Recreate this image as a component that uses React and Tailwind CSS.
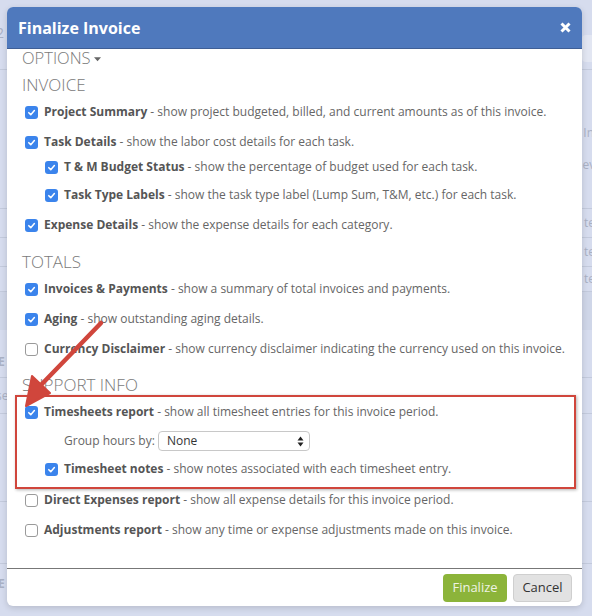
import React from 'react';

function Check({ checked }) {
  if (!checked) {
    return <span className="block h-[13px] w-[13px] shrink-0 rounded-[3px] border border-[#9a9a9a] bg-white" />;
  }
  return (
    <span className="flex h-[13px] w-[13px] shrink-0 items-center justify-center rounded-[3px] bg-[#3b84ec]">
      <svg width="9" height="9" viewBox="0 0 10 10">
        <path d="M2 5.2 L4.2 7.4 L8.2 2.8" fill="none" stroke="white" strokeWidth="1.7" strokeLinecap="round" strokeLinejoin="round" />
      </svg>
    </span>
  );
}

function Row({ label, desc, checked = true, nested = false, mt }) {
  return (
    <div className={`flex h-[18px] items-center ${nested ? 'pl-[38px]' : 'pl-[18px]'} ${mt}`}>
      <Check checked={checked} />
      <p className="ml-[6px] whitespace-nowrap text-[12px] text-[#666]">
        <span className="font-bold text-[#555]">{label}</span> - {desc}
      </p>
    </div>
  );
}

function Heading({ children, mt }) {
  return (
    <h3 className={`h-[20px] pl-[15px] text-[17px] font-light uppercase leading-[20px] text-[#7a7a7a] ${mt}`}>{children}</h3>
  );
}

function Backdrop() {
  return (
    <div className="flex h-full flex-col text-[12px] text-[#aab1c4]">
      <div className="flex h-[70px] items-start justify-between border-b border-[#c3cadc]">
        <span className="ml-[-4px] mt-[22px] text-[14px]">2</span>
        <span className="mt-[35px] h-[27px] w-[10px] rounded-l bg-[#e2e6f2]" />
      </div>
      <div className="flex h-[138px] flex-col items-end">
        <span className="mt-[54px] mr-[-2px]">In</span>
        <span className="mt-[14px] mr-[-10px]">eve</span>
      </div>
      <div className="flex h-[30px] items-center justify-end border-y border-[#c3cadc]"><span className="mr-[-3px]">te</span></div>
      <div className="flex h-[29px] items-center justify-end border-b border-[#c3cadc]"><span className="mr-[-3px]">te</span></div>
      <div className="flex h-[25px] items-center justify-end border-b border-[#c3cadc]"><span className="mr-[-3px]">te</span></div>
      <div className="h-[38px] bg-[#cfd6e8]" />
      <div className="flex h-[48px] items-end border-b border-[#c3cadc] pb-[6px]"><span className="ml-[-2px] font-bold">E</span></div>
      <div className="flex h-[36px] items-center border-b border-[#c3cadc]"><span className="ml-[-4px]">se</span></div>
      <div className="h-[88px] border-b border-[#c3cadc]" />
      <div className="h-[62px] border-b border-[#c3cadc]" />
      <div className="flex h-[40px] items-center"><span className="ml-[-2px] font-bold">E</span></div>
    </div>
  );
}

export default function App() {
  return (
    <div className="relative h-[616px] w-[592px] overflow-hidden bg-[#d6dcee] font-['Open_Sans',sans-serif]">
      <Backdrop />

      <div className="absolute left-[7px] top-[7px] flex h-[599px] w-[575px] flex-col rounded-md bg-white shadow-[0_2px_6px_rgba(0,0,0,0.15)]">
        <div className="flex h-[42px] shrink-0 items-center justify-between rounded-t-md border-b border-[#3f5f96] bg-[#4f79bd] pl-[11px] pr-[11px]">
          <h2 className="text-[16px] font-bold text-white">Finalize Invoice</h2>
          <svg width="11" height="11" viewBox="0 0 11 11">
            <path d="M1.5 1.5 L9.5 9.5 M9.5 1.5 L1.5 9.5" stroke="white" strokeWidth="3" />
          </svg>
        </div>

        <div className="flex flex-1 flex-col">
          <div className="flex h-[18px] items-center pl-[15px] text-[16.5px] font-light text-[#7a7a7a]">
            OPTIONS
            <svg className="ml-[3px] mt-[2px]" width="7" height="5" viewBox="0 0 8 5"><path d="M0 0 L8 0 L4 4.5 Z" fill="#666" /></svg>
          </div>

          <Heading mt="mt-[8px]">Invoice</Heading>
          <Row mt="mt-[8px]" label="Project Summary" desc="show project budgeted, billed, and current amounts as of this invoice." />
          <Row mt="mt-[12px]" label="Task Details" desc="show the labor cost details for each task." />
          <Row mt="mt-[7px]" nested label="T & M Budget Status" desc="show the percentage of budget used for each task." />
          <Row mt="mt-[10px]" nested label="Task Type Labels" desc="show the task type label (Lump Sum, T&M, etc.) for each task." />
          <Row mt="mt-[12px]" label="Expense Details" desc="show the expense details for each category." />

          <Heading mt="mt-[18px]">Totals</Heading>
          <Row mt="mt-[8px]" label="Invoices & Payments" desc="show a summary of total invoices and payments." />
          <Row mt="mt-[12px]" label="Aging" desc="show outstanding aging details." />
          <Row mt="mt-[12px]" checked={false} label="Currency Disclaimer" desc="show currency disclaimer indicating the currency used on this invoice." />

          <Heading mt="mt-[17px]">Support Info</Heading>
          <Row mt="mt-[8px]" label="Timesheets report" desc="show all timesheet entries for this invoice period." />
          <div className="mt-[10px] flex h-[20px] items-center pl-[57px]">
            <span className="w-[94px] text-[12px] text-[#666]">Group hours by:</span>
            <div className="flex h-[20px] w-[152px] items-center justify-between rounded-[4px] border border-[#c8c8c8] bg-white pl-[8px] pr-[5px]">
              <span className="text-[12px] text-[#333]">None</span>
              <svg width="7" height="11" viewBox="0 0 7 11">
                <path d="M3.5 0.5 L6.5 4.5 L0.5 4.5 Z M3.5 10.5 L6.5 6.5 L0.5 6.5 Z" fill="#222" />
              </svg>
            </div>
          </div>
          <Row mt="mt-[9px]" nested label="Timesheet notes" desc="show notes associated with each timesheet entry." />
          <Row mt="mt-[13px]" checked={false} label="Direct Expenses report" desc="show all expense details for this invoice period." />
          <Row mt="mt-[12px]" checked={false} label="Adjustments report" desc="show any time or expense adjustments made on this invoice." />
        </div>

        <div className="flex h-[38px] shrink-0 items-start justify-end gap-[6px] border-t border-[#777] pr-[10px] pt-[5px]">
          <button className="h-[28px] w-[64px] rounded-[4px] bg-[#8cb43a] text-[13px] text-[#eef3e4]">Finalize</button>
          <button className="h-[28px] w-[59px] rounded-[4px] border border-[#cfcfcf] bg-[#e2e2e2] text-[13px] text-[#333]">Cancel</button>
        </div>
      </div>

      <div className="pointer-events-none absolute left-[15px] top-[395px] h-[94px] w-[561px] border-2 border-[#d0463c] shadow-[1px_1px_3px_rgba(0,0,0,0.3)]" />

      <svg className="pointer-events-none absolute left-0 top-0" width="592" height="616">
        <path d="M101 323 L40 386" stroke="#d0463c" strokeWidth="4.5" strokeLinecap="round" />
        <path d="M26 406 L32 376 L50 393 Z" fill="#d0463c" stroke="#d0463c" strokeWidth="2" strokeLinejoin="round" />
      </svg>
    </div>
  );
}
